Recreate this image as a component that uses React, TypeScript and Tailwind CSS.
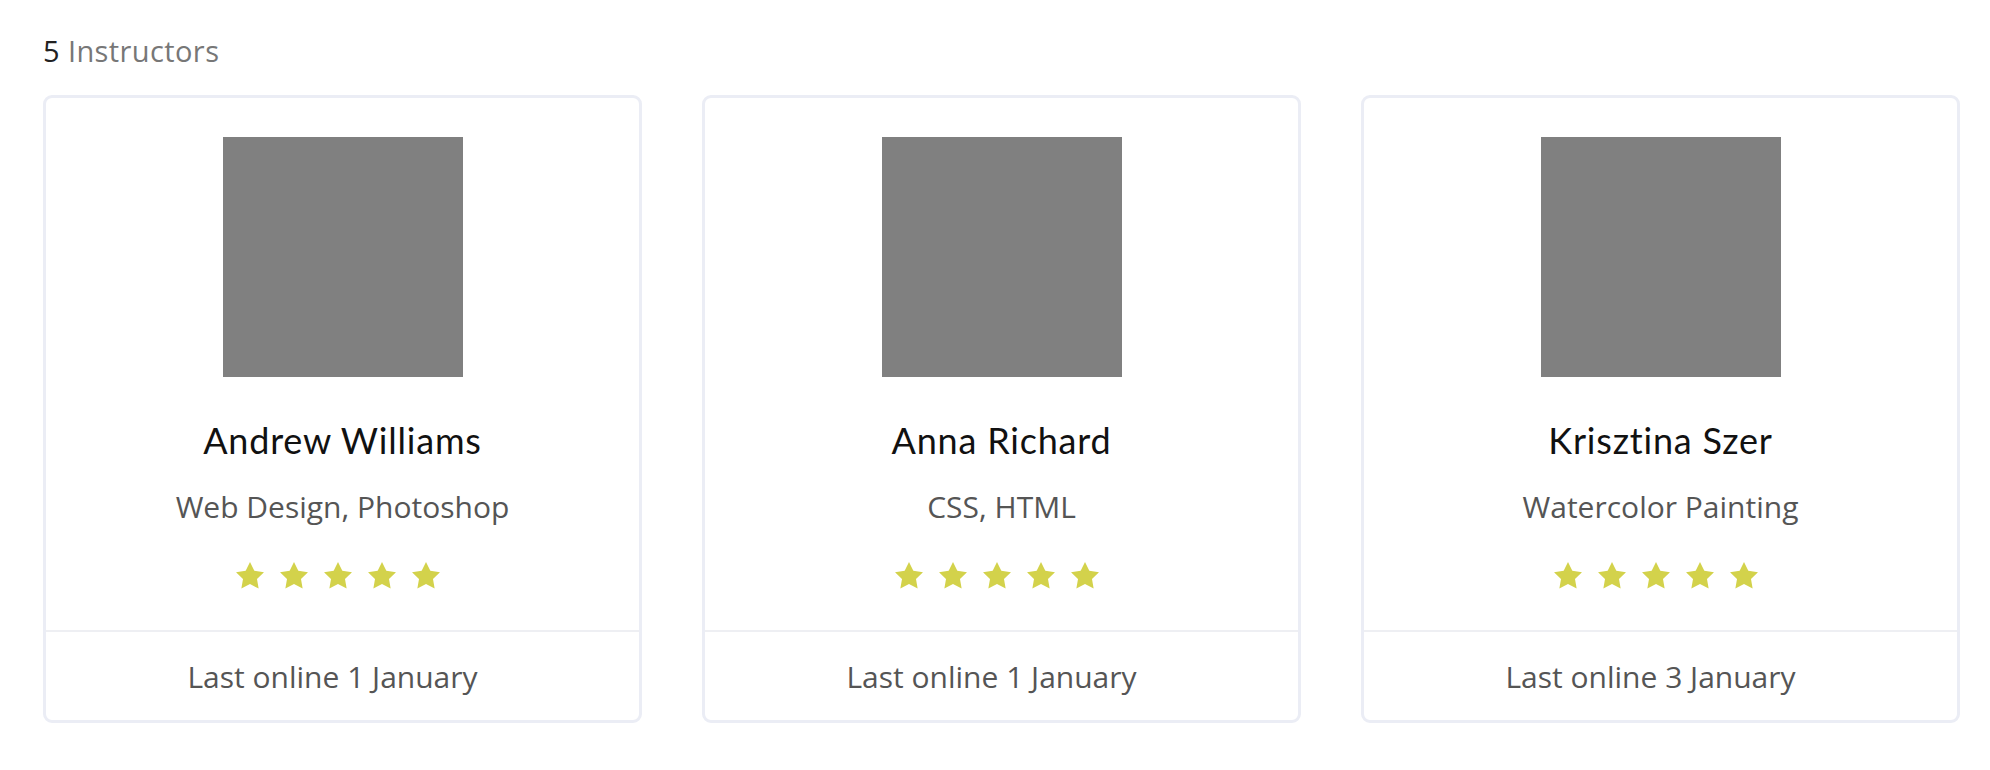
import React from "react";

type Instructor = { name: string; skills: string; last: string };

const instructors: Instructor[] = [
  { name: "Andrew Williams", skills: "Web Design, Photoshop", last: "Last online 1 January" },
  { name: "Anna Richard", skills: "CSS, HTML", last: "Last online 1 January" },
  { name: "Krisztina Szer", skills: "Watercolor Painting", last: "Last online 3 January" },
];

function Star() {
  return (
    <svg width="28" height="26.6" viewBox="2 2 20 19.02" className="block">
      <polygon
        points="12,2 15.09,8.26 22,9.27 17,14.14 18.18,21.02 12,17.77 5.82,21.02 7,14.14 2,9.27 8.91,8.26"
        fill="#d3d24b"
      />
    </svg>
  );
}

function Card({ data }: { data: Instructor }) {
  return (
    <div className="w-[599px] rounded-[9px] border-[3px] border-[#ebedf5] bg-white">
      <div className="flex flex-col items-center pt-[39px] pb-[40px]">
        <div className="h-[240px] w-[240px] bg-[#808080]" />
        <div className="mt-[41px] text-[36px] leading-[44px] tracking-[0.8px] text-[#111111] [font-family:Lato,'Open_Sans',sans-serif]">
          {data.name}
        </div>
        <div className="mt-[25px] text-[30px] leading-[40px] text-[#555555] [font-family:'Open_Sans',sans-serif]">
          {data.skills}
        </div>
        <div className="mt-[35px] flex h-[28px] items-start gap-[16px] pr-[9px]">
          <Star />
          <Star />
          <Star />
          <Star />
          <Star />
        </div>
      </div>
      <div className="border-t-2 border-[#eeeff3] pt-[25px] pb-[23px] pr-[20px] text-center text-[30px] leading-[40px] text-[#555555] [font-family:'Open_Sans',sans-serif]">
        {data.last}
      </div>
    </div>
  );
}

export default function App() {
  return (
    <div className="min-h-[770px] w-[1990px] bg-white pl-[43px] pt-[32px]">
      <div className="text-[29px] leading-[38px] tracking-[0.4px] [font-family:'Open_Sans',sans-serif]">
        <span className="text-[#222222]">5</span>{" "}
        <span className="text-[#777777]">Instructors</span>
      </div>
      <div className="mt-[25px] flex gap-[60px]">
        {instructors.map((d) => (
          <Card key={d.name} data={d} />
        ))}
      </div>
    </div>
  );
}
